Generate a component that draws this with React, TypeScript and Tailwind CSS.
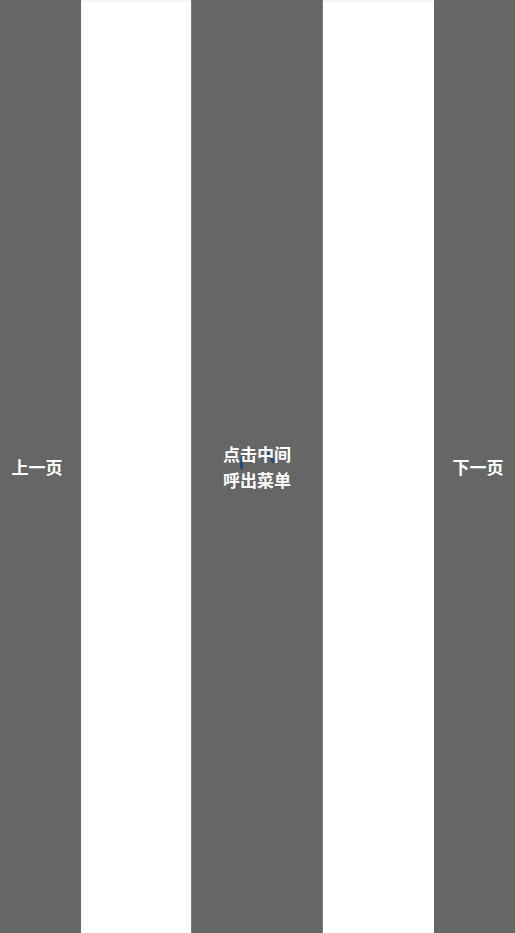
import React from "react";

export default function App() {
  const font = { fontFamily: '"Noto Sans CJK SC", "Noto Sans", sans-serif' };
  return (
    <div className="relative flex h-[933px] w-[515px] overflow-hidden bg-white" style={font}>
      <div className="flex w-[81px] items-center justify-center bg-[#666666] pr-[7px]">
        <span className="text-[17px] font-bold leading-[26px] text-white">上一页</span>
      </div>
      <div className="w-[110px] bg-white shadow-[inset_0_3px_3px_-2px_rgba(0,0,0,0.08)]" />
      <div className="relative flex w-[132px] items-center justify-center bg-[#666666] border-x border-[#7a7a7a]">
        <svg className="absolute left-[40px] top-[440px]" width="50" height="40" viewBox="0 0 50 40">
          <path d="M 9.5 28 Q 9 22 10.5 16" fill="none" stroke="#1d4c7c" strokeWidth="3" strokeLinecap="round" />
          <path d="M 32 11 Q 38 14 41 21" fill="none" stroke="#1d4c7c" strokeWidth="3" strokeLinecap="round" />
        </svg>
        <span className="relative text-center text-[17px] font-bold leading-[26px] text-white">
          点击中间
          <br />
          呼出菜单
        </span>
      </div>
      <div className="w-[111px] bg-white shadow-[inset_0_3px_3px_-2px_rgba(0,0,0,0.08)]" />
      <div className="flex w-[81px] items-center justify-center bg-[#666666] pl-[7px]">
        <span className="text-[17px] font-bold leading-[26px] text-white">下一页</span>
      </div>
    </div>
  );
}
